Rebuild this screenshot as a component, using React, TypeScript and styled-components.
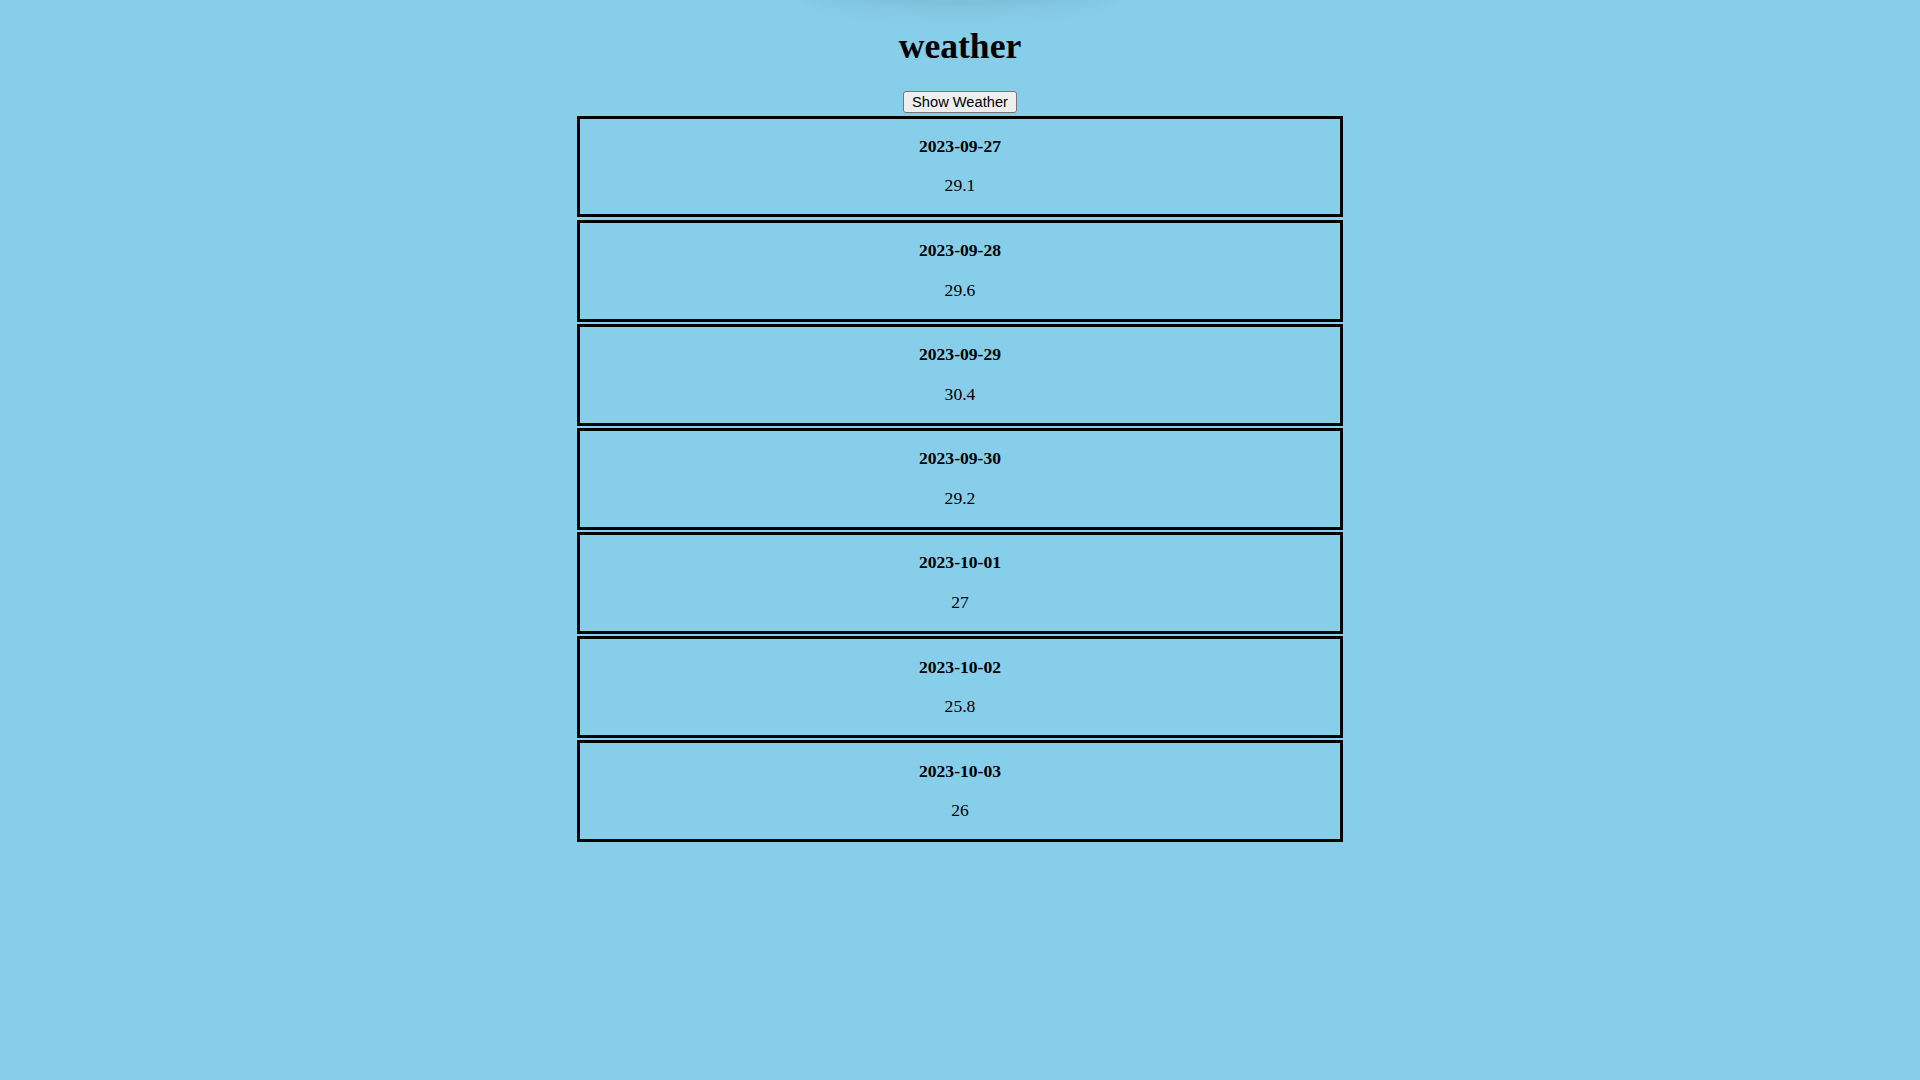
import styled, { createGlobalStyle } from 'styled-components';

interface weatherType {
  date: string;
  temp: string;
}

const weatherList: weatherType[] = [
  { date: '2023-09-27', temp: '29.1' },
  { date: '2023-09-28', temp: '29.6' },
  { date: '2023-09-29', temp: '30.4' },
  { date: '2023-09-30', temp: '29.2' },
  { date: '2023-10-01', temp: '27' },
  { date: '2023-10-02', temp: '25.8' },
  { date: '2023-10-03', temp: '26' },
];

const GlobalStyle = createGlobalStyle`
  html {
    background: #87ceeb;
  }
  body {
    margin: 0 8.8px 8.8px;
    background: #87ceeb;
    font-family: 'Liberation Serif', 'Times New Roman', serif;
    font-size: 17.6px;
    color: #000;
  }
`;

const TopGlow = styled.div`
  position: fixed;
  top: -34px;
  left: 50%;
  transform: translateX(-50%);
  width: 300px;
  height: 34px;
  border-radius: 50%;
  box-shadow: 0 0 22px 6px rgba(0, 0, 0, 0.1);
  pointer-events: none;
`;

const Title = styled.h1`
  margin: 0;
  padding: 24.6px 0 24.2px;
  font-size: 35.6px;
  font-weight: bold;
  text-align: center;
`;

const ButtonRow = styled.div`
  text-align: center;
`;

const ShowButton = styled.button`
  font-family: 'Liberation Sans', Arial, sans-serif;
  font-size: 14.67px;
  color: #000;
  background: #efefef;
  border: 1px solid #767676;
  border-radius: 3px;
  padding: 2.3px 8.4px;
  cursor: pointer;
`;

const Card = styled.div`
  width: 40%;
  margin: 2.2px auto;
  border: 3.3px solid #000;
  text-align: center;
`;

const DateText = styled.p`
  margin: 17.6px 0 18.3px;
  font-weight: bold;
`;

const TempText = styled.p`
  margin: 0 0 18px;
`;

export default function App() {
  return (
    <>
      <GlobalStyle />
      <TopGlow />
      <Title>weather</Title>
      <ButtonRow>
        <ShowButton type='button'>Show Weather</ShowButton>
      </ButtonRow>
      {weatherList.map((el) => (
        <Card key={el.date}>
          <DateText>{el.date}</DateText>
          <TempText>{el.temp}</TempText>
        </Card>
      ))}
    </>
  );
}
